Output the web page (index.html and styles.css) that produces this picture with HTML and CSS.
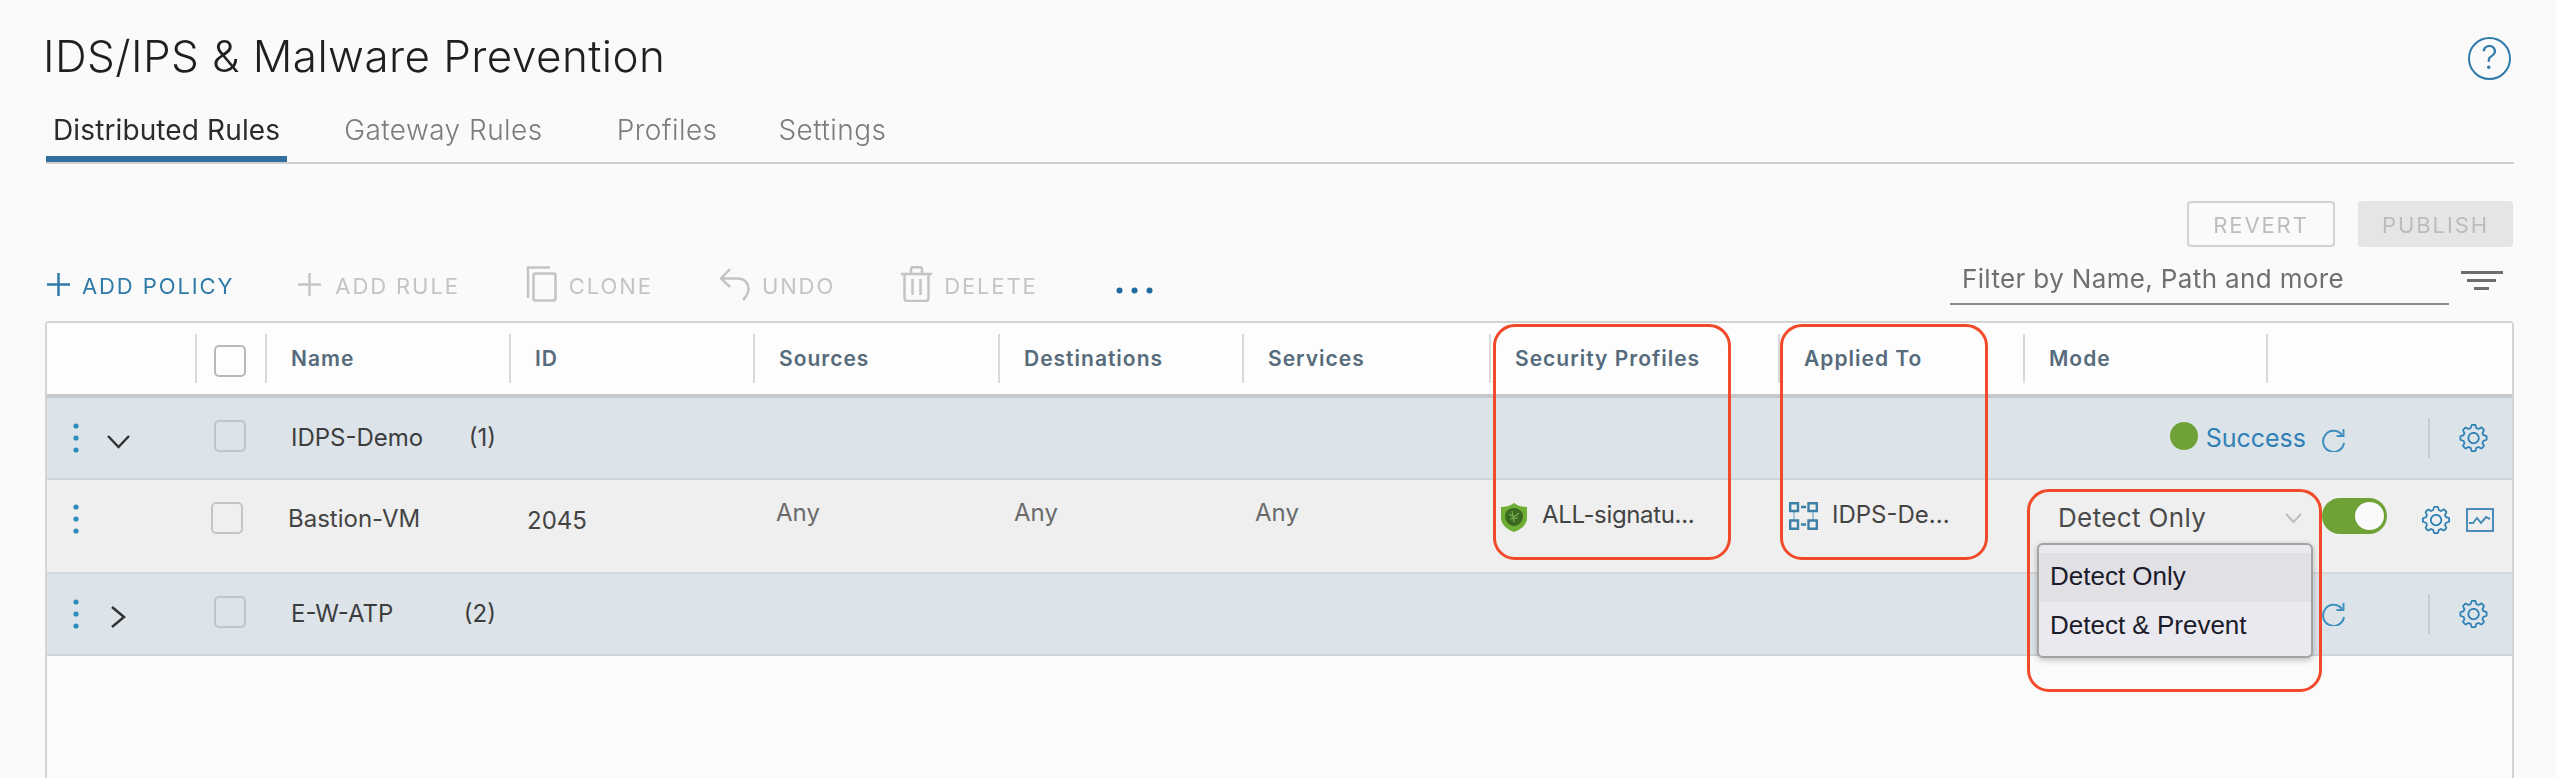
FILE: index.html
```html
<!DOCTYPE html>
<html lang="en">
<head>
<meta charset="utf-8">
<title>IDS/IPS &amp; Malware Prevention</title>
<link rel="stylesheet" href="styles.css">
</head>
<body>
<svg class="sprite" xmlns="http://www.w3.org/2000/svg">
  <symbol id="cog" viewBox="2 2 32 32">
    <path d="M18.1,11c-3.9,0-7,3.1-7,7s3.1,7,7,7c3.9,0,7-3.1,7-7S22,11,18.1,11z M18.1,23c-2.8,0-5-2.2-5-5s2.2-5,5-5c2.8,0,5,2.2,5,5S20.9,23,18.1,23z"/>
    <path d="M32.8,14.7L30,13.8l-0.6-1.5l1.4-2.6c0.3-0.6,0.2-1.4-0.3-1.9l-2.4-2.4c-0.5-0.5-1.3-0.6-1.9-0.3l-2.6,1.4l-1.5-0.6l-0.9-2.8C21,2.5,20.4,2,19.7,2h-3.4c-0.7,0-1.3,0.5-1.4,1.2L14,6c-0.6,0.1-1.1,0.3-1.6,0.6L9.8,5.2C9.2,4.9,8.4,5,7.9,5.5L5.5,7.9C5,8.4,4.9,9.2,5.2,9.8l1.3,2.5c-0.2,0.5-0.4,1.1-0.6,1.6l-2.8,0.9C2.5,15,2,15.6,2,16.3v3.4c0,0.7,0.5,1.3,1.2,1.5L6,22.1l0.6,1.5l-1.4,2.6c-0.3,0.6-0.2,1.4,0.3,1.9l2.4,2.4c0.5,0.5,1.3,0.6,1.9,0.3l2.6-1.4l1.5,0.6l0.9,2.9c0.2,0.6,0.8,1.1,1.5,1.1h3.4c0.7,0,1.3-0.5,1.5-1.1l0.9-2.9l1.5-0.6l2.6,1.4c0.6,0.3,1.4,0.2,1.9-0.3l2.4-2.4c0.5-0.5,0.6-1.3,0.3-1.9l-1.4-2.6l0.6-1.5l2.9-0.9c0.6-0.2,1.1-0.8,1.1-1.5v-3.4C34,15.6,33.5,14.9,32.8,14.7z M32,19.4l-3.6,1.1L28.3,21l-0.9,2.1l-0.3,0.5l1.8,3.3l-2,2l-3.3-1.8l-0.5,0.3c-0.7,0.4-1.4,0.7-2.1,0.9l-0.5,0.1L19.4,32h-2.8l-1.1-3.6L15,28.3l-2.1-0.9l-0.5-0.3l-3.3,1.8l-2-2l1.8-3.3l-0.3-0.5c-0.4-0.7-0.7-1.4-0.9-2.1l-0.1-0.5L4,19.4v-2.8l3.4-1l0.2-0.5c0.2-0.8,0.5-1.5,0.9-2.2l0.3-0.5L7.1,9.1l2-2l3.2,1.8l0.5-0.3c0.7-0.4,1.4-0.7,2.2-0.9l0.5-0.2L16.6,4h2.8l1.1,3.5L21,7.7c0.7,0.2,1.4,0.5,2.1,0.9l0.5,0.3l3.3-1.8l2,2l-1.8,3.3l0.3,0.5c0.4,0.7,0.7,1.4,0.9,2.1l0.1,0.5l3.6,1.1V19.4z"/>
  </symbol>
  <symbol id="refresh" viewBox="0 0 25 24">
    <path d="M21 7A10.500 10.500 0 1 0 23 15" fill="none" stroke="currentColor" stroke-width="2"/>
    <path d="M22.500 1V8H15.500" fill="none" stroke="currentColor" stroke-width="2"/>
  </symbol>
  <symbol id="handle" viewBox="0 0 6 30">
    <circle cx="3" cy="3" r="2.6"/><circle cx="3" cy="15" r="2.6"/><circle cx="3" cy="27" r="2.6"/>
  </symbol>
</svg>
<div class="page">
  <header class="head">
    <h1 class="title">IDS/IPS &amp; Malware Prevention</h1>
    <span class="help">?</span>
  </header>
  <nav class="tabs">
    <span class="tab tab-active">Distributed Rules</span>
    <span class="tab tab-gateway">Gateway Rules</span>
    <span class="tab tab-profiles">Profiles</span>
    <span class="tab tab-settings">Settings</span>
  </nav>
  <div class="publish-bar">
    <span class="btn btn-outline">REVERT</span>
    <span class="btn btn-solid">PUBLISH</span>
  </div>
  <div class="toolbar">
    <div class="actions">
      <span class="action action-on">
        <svg class="i-plus" viewBox="0 0 23 23"><path d="M11.5 0V23M0 11.5H23"/></svg>
        <span class="action-label">ADD POLICY</span>
      </span>
      <span class="action">
        <svg class="i-plus" viewBox="0 0 23 23"><path d="M11.5 0V23M0 11.5H23"/></svg>
        <span class="action-label">ADD RULE</span>
      </span>
      <span class="action action-tight">
        <svg class="i-tool" viewBox="0 0 31 36"><path d="M2 32V1.5H24"/><rect x="7.5" y="7.5" width="22" height="27" rx="2"/></svg>
        <span class="action-label">CLONE</span>
      </span>
      <span class="action action-tight">
        <svg class="i-tool" viewBox="0 0 31 36"><path d="M11 3L2 12.5L11 21M2 12.5H19C27 12.5 31 20 29 26C28 30 26 32 24 34"/></svg>
        <span class="action-label">UNDO</span>
      </span>
      <span class="action action-tight">
        <svg class="i-tool" viewBox="0 0 31 36"><path d="M0 8H31M10 8V3C10 1.500 11 1.200 12 1.200H19C20 1.200 21 1.500 21 3V8M3.500 8V32C3.500 34 4.500 35 6.500 35H24.500C26.500 35 27.500 34 27.500 32V8M11.500 13V29M19.500 13V29"/></svg>
        <span class="action-label">DELETE</span>
      </span>
      <svg class="i-more" viewBox="0 0 37 7"><circle cx="3.500" cy="3.500" r="3"/><circle cx="18.500" cy="3.500" r="3"/><circle cx="33.500" cy="3.500" r="3"/></svg>
    </div>
    <div class="filter-group">
      <span class="filter">Filter by Name, Path and more</span>
      <svg class="i-filter" viewBox="0 0 42 19"><rect width="42" height="3"/><rect x="6" y="8" width="29" height="3"/><rect x="13" y="16" width="15" height="3"/></svg>
    </div>
  </div>
  <section class="table">
    <div class="row row-head">
      <span class="th th-plain"></span>
      <span class="th"><span class="check check-head"></span></span>
      <span class="th th-text">Name</span>
      <span class="th th-text">ID</span>
      <span class="th th-text">Sources</span>
      <span class="th th-text">Destinations</span>
      <span class="th th-text">Services</span>
      <span class="th th-text">Security Profiles</span>
      <span class="th th-text">Applied To</span>
      <span class="th th-text">Mode</span>
      <span class="th"></span>
    </div>
    <div class="row row-group">
      <span class="cell-drag">
        <svg class="handle"><use href="#handle"/></svg>
        <svg class="chevron" viewBox="0 0 24 24"><path d="M2 10L12.500 21L23 10"/></svg>
      </span>
      <span class="cell-check"><span class="check"></span></span>
      <span class="group-name"><span>IDPS-Demo</span><span>(1)</span></span>
      <span class="status">
        <span class="dot"></span>
        <span class="success">Success</span>
        <svg class="i-refresh i-refresh-low"><use href="#refresh"/></svg>
        <span class="vsep"></span>
        <svg class="i-cog"><use href="#cog"/></svg>
      </span>
    </div>
    <div class="row row-rule">
      <span class="cell-drag cell-drag-rule"><svg class="handle"><use href="#handle"/></svg></span>
      <span class="cell-check cell-check-rule"><span class="check"></span></span>
      <span class="td td-name">Bastion-VM</span>
      <span class="td td-id">2045</span>
      <span class="td td-any td-src">Any</span>
      <span class="td td-any td-dst">Any</span>
      <span class="td td-any td-svc">Any</span>
      <span class="td td-icon td-profile">
        <svg class="i-shield" viewBox="0 0 26 29">
          <path class="shield-outer" d="M13 0C17 3 22 4 26 4V15C26 22 19 27 13 29C7 27 0 22 0 15V4C4 4 9 3 13 0Z"/>
          <path class="shield-inner" d="M13 5C17 5 22 8 22 13C22 19 17 23 13 23C9 23 4 19 4 13C4 8 9 5 13 5Z"/>
          <path class="shield-mark" d="M8 11L13 14L18 10M11 8L13 19M9 16L17 15"/>
        </svg>
        <span class="td-label td-label-tight">ALL-signatu...</span>
      </span>
      <span class="td td-icon td-applied">
        <svg class="i-topo" viewBox="0 0 29 28">
          <path class="topo-link" d="M5 10V18M24 10V18"/>
          <path class="topo-box" d="M1.200 1.200H9V9H1.200ZM19.500 1.200H27.800V9H19.500ZM1.200 18.500H9V26.800H1.200ZM19.500 18.500H27.800V26.800H19.500ZM12 5H17M12 22.500H17"/>
        </svg>
        <span class="td-label">IDPS-De...</span>
      </span>
      <span class="td td-mode">
        <span class="select">Detect Only<svg class="i-select" viewBox="0 0 17 10"><path d="M1 1L8.500 9L16 1"/></svg></span>
      </span>
      <span class="td td-controls">
        <span class="toggle"></span>
        <svg class="i-cog i-cog-rule"><use href="#cog"/></svg>
        <svg class="i-chart" viewBox="0 0 28 24"><rect x="1" y="1" width="26" height="22"/><path d="M3 15H7L11 10L15 15L20 9L24 11"/></svg>
      </span>
    </div>
    <div class="row row-group">
      <span class="cell-drag">
        <svg class="handle"><use href="#handle"/></svg>
        <svg class="chevron" viewBox="0 0 24 24"><path d="M6 5L18 15L6 25"/></svg>
      </span>
      <span class="cell-check"><span class="check"></span></span>
      <span class="group-name"><span>E-W-ATP</span><span>(2)</span></span>
      <span class="status">
        <svg class="i-refresh"><use href="#refresh"/></svg>
        <span class="vsep"></span>
        <svg class="i-cog"><use href="#cog"/></svg>
      </span>
    </div>
  </section>
  <div class="menu">
    <div class="menu-option menu-option-on">Detect Only</div>
    <div class="menu-option">Detect &amp; Prevent</div>
  </div>
  <span class="callout callout-profiles"></span>
  <span class="callout callout-applied"></span>
  <span class="callout callout-mode"></span>
</div>
</body>
</html>
```
FILE: styles.css
```css
* { box-sizing: border-box; }
html, body { margin: 0; height: 100%; background: #fafafa; }
body { overflow: hidden; font-family: Inter, "Liberation Sans", sans-serif; color: #444; }
.sprite { display: none; }

.page {
  position: relative;
  height: 778px;
  padding: 0 42px 0 45px;
  display: flex;
  flex-direction: column;
  filter: blur(0.6px);
}

/* heading */
.head { display: flex; justify-content: space-between; align-items: flex-start; padding-top: 28px; padding-right: 3px; }
.title { margin: 0 0 0 -2px; font-size: 44px; line-height: 56px; font-weight: 300; letter-spacing: 0.43px; color: #1f1f1f; }
.help {
  width: 43px; height: 43px; margin-top: 9px;
  border: 2.5px solid #2f7aa8; border-radius: 50%;
  color: #2f7aa8; font-size: 33px; line-height: 37px; text-align: center; font-weight: 300;
}

/* tabs */
.tabs { display: flex; margin: 28px 0 0 1px; border-bottom: 2px solid #d0d0d0; }
.tab { padding: 0 7px 8px; font-size: 28px; line-height: 36px; letter-spacing: 0.45px; border-bottom: 6px solid transparent; color: #7c7c7c; font-weight: 300; }
.tab-active { color: #2b2b2b; border-bottom-color: #2f6fa0; font-weight: 400; letter-spacing: 0.12px; }
.tab-gateway { margin-left: 50px; }
.tab-profiles { margin-left: 60px; }
.tab-settings { margin-left: 47px; }

/* publish bar */
.publish-bar { display: flex; justify-content: flex-end; gap: 23px; margin-top: 37px; padding-right: 1px; }
.btn { height: 46px; font-size: 22px; line-height: 44px; letter-spacing: 1.9px; text-align: center; border-radius: 4px; color: #bdbdbd; }
.btn-outline { width: 148px; border: 2px solid #d2d2d2; }
.btn-solid { width: 155px; background: #e5e5e5; border: 2px solid #e5e5e5; color: #bcbcbc; }

/* toolbar */
.toolbar { height: 74px; padding-top: 15px; display: flex; justify-content: space-between; align-items: flex-start; }
.actions { display: flex; align-items: center; padding: 4px 0 0 2px; height: 40px; gap: 66px; }
.action { display: flex; align-items: center; gap: 14px; color: #c4c4c4; }
.action-tight { gap: 12px; }
.action-on { color: #2f7aa8; gap: 12px; margin-right: -2px; }
.action-label { font-size: 22px; line-height: 36px; letter-spacing: 1.9px; padding-top: 4px; font-weight: 400; }
.i-plus { width: 23px; height: 23px; fill: none; stroke: currentColor; stroke-width: 2.5; }
.i-tool { width: 31px; height: 36px; fill: none; stroke: currentColor; stroke-width: 2.5; }
.i-more { width: 37px; height: 7px; margin: 12px 0 0 12px; fill: #1f6a9e; }
.filter-group { display: flex; align-items: flex-start; gap: 12px; padding-right: 11px; }
.filter { display: block; width: 499px; padding: 1px 0 8px 12px; font-size: 26px; line-height: 32px; letter-spacing: 0.36px; color: #6f6f6f; border-bottom: 2px solid #8c8c8c; }
.i-filter { width: 42px; height: 19px; margin-top: 9px; fill: #6e6e6e; }

/* table */
.table { flex: 1; border: 2px solid #d4d4d4; border-bottom: 0; border-radius: 4px 4px 0 0; background: #fbfbfb; }
.row { display: grid; grid-template-columns: 148px 70px 244px 244px 245px 244px 247px 289px 245px 243px 246px; }
.row-head { height: 75px; border-bottom: 4px solid #c6c8ca; background: #fdfdfd; }
.th { height: 49px; margin-top: 11px; border-left: 2px solid #d9d9d9; display: flex; align-items: center; }
.th-plain { border-left: 0; }
.th-text { padding-left: 24px; font-size: 21px; font-weight: 600; letter-spacing: 1px; color: #566b7b; }
.row-group { height: 82px; background: #dce4ea; border-bottom: 2px solid #cfd4d8; align-items: center; }
.row-rule { height: 94px; background: #efefef; border-bottom: 2px solid #d6d8da; }

.check { display: block; width: 32px; height: 32px; border: 2px solid #c2c4c6; border-radius: 5px; }
.check-head { margin: 4px 0 0 17px; background: #fdfdfd; border-color: #b9b9b9; }
.cell-drag { display: flex; align-items: center; padding-left: 26px; }
.cell-drag-rule { padding-top: 24px; align-items: flex-start; }
.handle { width: 6px; height: 30px; fill: #2f8cbf; }
.chevron { width: 24px; height: 24px; margin-left: 27px; fill: none; stroke: #333; stroke-width: 2.5; overflow: visible; }
.cell-check { padding: 0 0 4px 19px; }
.cell-check-rule { padding: 22px 0 0 16px; }
.group-name { display: flex; justify-content: space-between; width: 231px; padding-left: 26px; font-size: 24px; line-height: 30px; color: #3d3d3d; }
.status { grid-column: 4 / -1; display: flex; justify-content: flex-end; align-items: center; padding-right: 24px; }
.dot { width: 28px; height: 28px; border-radius: 50%; background: #6ea237; margin-bottom: 4px; }
.success { margin: 0 15px 0 8px; font-size: 25px; line-height: 30px; color: #2f80b5; }
.i-refresh { width: 25px; height: 24px; color: #3f8fbf; }
.i-refresh-low { margin-top: 4px; }
.vsep { width: 2px; height: 40px; margin: 0 29px 0 82px; background: #c3ccd2; }
.i-cog { width: 29px; height: 28px; fill: #2f80b5; }

.td { font-size: 24px; line-height: 30px; color: #444; min-width: 0; white-space: nowrap; }
.td-name { padding: 24px 0 0 23px; }
.td-id { padding: 26px 0 0 18px; }
.td-any { padding-top: 18px; color: #6a6a6a; }
.td-src { padding-left: 23px; }
.td-dst { padding-left: 16px; }
.td-svc { padding-left: 13px; }
.td-icon { display: flex; align-items: flex-start; padding-top: 20px; }
.td-profile { padding-left: 12px; gap: 15px; }
.td-applied { padding-left: 11px; gap: 14px; }
.td-label-tight { letter-spacing: -0.35px; }
.i-shield { width: 26px; height: 29px; margin-top: 3px; }
.shield-outer { fill: #6fae34; }
.shield-inner { fill: #3a6a20; }
.shield-mark { fill: none; stroke: #7fae55; stroke-width: 1.200; }
.i-topo { width: 29px; height: 28px; margin-top: 2px; fill: none; }
.topo-box { stroke: #3e7fa6; stroke-width: 2.4; }
.topo-link { stroke: #a9c6d8; stroke-width: 2; }
.td-mode { padding: 22px 0 0 35px; }
.select { display: flex; justify-content: space-between; align-items: center; width: 244px; font-size: 26px; line-height: 32px; letter-spacing: 0.36px; color: #4a4a4a; }
.i-select { width: 17px; height: 10px; fill: none; stroke: #bdbdbd; stroke-width: 2; }
.td-controls { display: flex; align-items: flex-start; padding: 18px 0 0 56px; }
.toggle { position: relative; width: 65px; height: 36px; border-radius: 18px; background: #6ea237; }
.toggle::after { content: ""; position: absolute; top: 4px; right: 3px; width: 29px; height: 28px; border-radius: 50%; background: #fafafa; }
.i-cog-rule { margin: 8px 0 0 35px; width: 28px; }
.i-chart { width: 28px; height: 24px; margin: 10px 0 0 16px; fill: none; stroke: #4a8db8; stroke-width: 2; }

/* native select popup */
.menu {
  position: absolute; left: 2037px; top: 543px; width: 276px; height: 115px;
  padding-top: 8px;
  background: #e9e9ef; border: 2px solid #a3a3a3; border-radius: 6px;
  box-shadow: 0 2px 6px rgba(0, 0, 0, 0.25);
  font-family: "Liberation Sans", Arial, sans-serif; font-size: 26px; color: #1b1b2a;
}
.menu-option { height: 49px; line-height: 47px; padding-left: 11px; }
.menu-option-on { background: #e0e0e5; }

/* red annotation outlines */
.callout { position: absolute; border: 3px solid #f04a2a; border-radius: 22px; }
.callout-profiles { left: 1493px; top: 324px; width: 238px; height: 236px; }
.callout-applied { left: 1780px; top: 324px; width: 208px; height: 236px; }
.callout-mode { left: 2027px; top: 489px; width: 295px; height: 203px; }
```
